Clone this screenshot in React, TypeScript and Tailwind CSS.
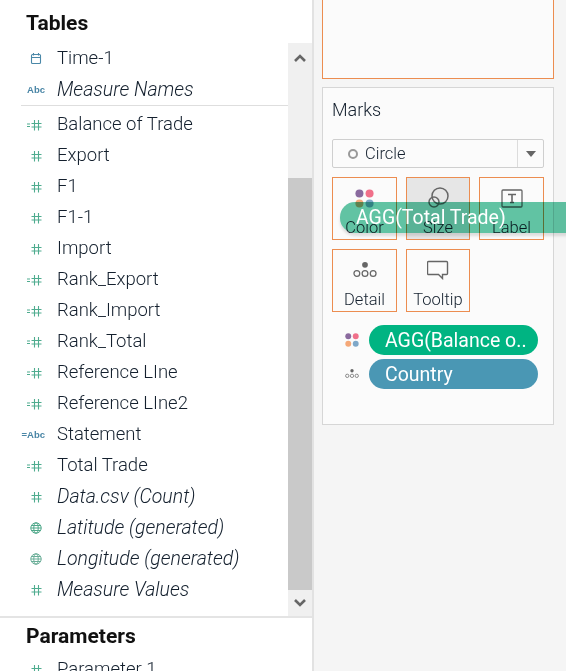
import React from "react";

const Hash = ({ calc = false }: { calc?: boolean }) => (
  <svg width="24" height="16" viewBox="0 0 24 16" fill="none" stroke="#4fac8f" strokeWidth="1.1">
    {calc && <path d="M6 7h3M6 9.5h3" />}
    <path d="M13.5 3v10.5M17.5 3v10.5M10.5 6.5h10M10.5 10h10" />
  </svg>
);
const Calendar = () => (
  <svg width="24" height="16" viewBox="0 0 24 16" fill="none" stroke="#4a88a8" strokeWidth="1.1">
    <rect x="10.5" y="3.5" width="9" height="9" rx="1" />
    <path d="M10.5 6.5h9M12.5 2v2.5M17.5 2v2.5" />
  </svg>
);
const Globe = ({ c }: { c: string }) => (
  <svg width="24" height="16" viewBox="0 0 24 16" fill="none" stroke={c} strokeWidth="1">
    <circle cx="15" cy="8" r="5.2" />
    <ellipse cx="15" cy="8" rx="2.2" ry="5.2" />
    <path d="M9.8 8h10.4M10.6 5.5h8.8M10.6 10.5h8.8" />
  </svg>
);
const AbcIcon = ({ calc = false }: { calc?: boolean }) => (
  <span className="block w-[24px] text-right text-[9.5px] leading-4 font-bold text-[#4a86a6] font-['Liberation_Sans',sans-serif]">
    {calc ? "=Abc" : "Abc"}
  </span>
);

const Row = ({ icon, label, italic }: { icon: React.ReactNode; label: string; italic?: boolean }) => (
  <div className="flex h-[31px] shrink-0 items-center">
    <div className="ml-[21px] flex w-[24px] justify-center">{icon}</div>
    <span className={`ml-[12px] whitespace-nowrap font-light text-[#14202e] ${italic ? "text-[19.5px] italic" : "text-[18.5px]"}`}>{label}</span>
  </div>
);

const Card = ({ label, icon, active }: { label: string; icon: React.ReactNode; active?: boolean }) => (
  <div className={`flex h-[63px] flex-col items-center border border-[#ec8d50] ${active ? "bg-[#e6e6e6]" : ""}`}>
    <div className="mt-[6px] flex h-[28px] items-center justify-center">{icon}</div>
    <span className="mt-[6px] text-[16.5px] leading-5 font-light text-[#14202e]">{label}</span>
  </div>
);

const Dots = ({ size = 8, gap = 1 }: { size?: number; gap?: number }) => (
  <svg width={size * 2 + gap} height={size * 2 + gap} viewBox="0 0 18 18">
    <circle cx="4.2" cy="4.2" r="3.8" fill="#8a6a9e" />
    <circle cx="13.8" cy="4.2" r="3.8" fill="#f0708a" />
    <circle cx="4.2" cy="13.8" r="3.8" fill="#f5a878" />
    <circle cx="13.8" cy="13.8" r="3.8" fill="#7fa8c8" />
  </svg>
);
const DetailIcon = ({ w = 24 }: { w?: number }) => (
  <svg width={w} height={w * 0.8} viewBox="0 0 25 20" fill="none" stroke="#666" strokeWidth="1.3">
    <circle cx="12.5" cy="5" r="3" fill="#666" stroke="none" />
    <circle cx="4" cy="14" r="3" />
    <circle cx="12.5" cy="14" r="3" />
    <circle cx="21" cy="14" r="3" />
  </svg>
);

const Pill = ({ label, color }: { label: string; color: string }) => (
  <div className={`flex h-[30px] w-[169px] items-center whitespace-nowrap rounded-[15px] pl-[16px] pt-px text-[19.5px] text-white ${color}`}>
    {label}
  </div>
);

export default function App() {
  return (
    <div className="relative flex h-[671px] w-[566px] overflow-hidden bg-[#f5f5f5] font-['Roboto',sans-serif]">
      <div className="flex w-[314px] shrink-0 flex-col border-r-2 border-[#e2e2e2] bg-white">
        <div className="flex h-[43px] shrink-0 items-center pl-[26px] pt-[5px] text-[21px] font-bold text-[#111]">Tables</div>
        <div className="flex h-[575px] shrink-0 border-b-2 border-[#e4e4e4]">
          <div className="w-[288px]">
            <Row icon={<Calendar />} label="Time-1" />
            <Row icon={<AbcIcon />} label="Measure Names" italic />
            <div className="ml-[21px] h-px bg-[#dedede]" />
            <div className="pt-[3px]">
              <Row icon={<Hash calc />} label="Balance of Trade" />
              <Row icon={<Hash />} label="Export" />
              <Row icon={<Hash />} label="F1" />
              <Row icon={<Hash />} label="F1-1" />
              <Row icon={<Hash />} label="Import" />
              <Row icon={<Hash calc />} label="Rank_Export" />
              <Row icon={<Hash calc />} label="Rank_Import" />
              <Row icon={<Hash calc />} label="Rank_Total" />
              <Row icon={<Hash calc />} label="Reference LIne" />
              <Row icon={<Hash calc />} label="Reference LIne2" />
              <Row icon={<AbcIcon calc />} label="Statement" />
              <Row icon={<Hash calc />} label="Total Trade" />
              <Row icon={<Hash />} label="Data.csv (Count)" italic />
              <Row icon={<Globe c="#4fa88a" />} label="Latitude (generated)" italic />
              <Row icon={<Globe c="#6aae98" />} label="Longitude (generated)" italic />
              <Row icon={<Hash />} label="Measure Values" italic />
            </div>
          </div>
          <div className="flex w-[24px] flex-col bg-[#f0f0f0]">
            <div className="flex h-[135px] items-start justify-center pt-[10px]">
              <svg width="14" height="10" viewBox="0 0 14 10" fill="none" stroke="#666" strokeWidth="2.6"><path d="M2 8l5-5 5 5" /></svg>
            </div>
            <div className="h-[412px] bg-[#c9c9c9]" />
            <div className="flex flex-1 items-center justify-center">
              <svg width="14" height="10" viewBox="0 0 14 10" fill="none" stroke="#666" strokeWidth="2.6"><path d="M2 2l5 5 5-5" /></svg>
            </div>
          </div>
        </div>
        <div className="flex h-[36px] shrink-0 items-center pl-[26px] pt-[2px] text-[21px] font-bold text-[#111]">Parameters</div>
        <Row icon={<Hash />} label="Parameter 1" />
      </div>

      <div className="flex-1 pl-[8px]">
        <div className="h-[79px] w-[232px] border border-t-0 border-[#ec8d50] bg-[#fbfbfb]" />
        <div className="mt-[8px] h-[338px] w-[232px] border border-[#d6d6d6] bg-[#fbfbfb] px-[9px]">
          <div className="mt-[10px] text-[18px] leading-6 font-light text-[#14202e]">Marks</div>
          <div className="mt-[17px] flex h-[29px] items-center rounded-[2px] border border-[#cfcfcf]">
            <span className="ml-[15px] h-[10px] w-[10px] rounded-full border-2 border-[#999]" />
            <span className="ml-[7px] flex-1 pt-px text-[16.5px] font-light text-[#14202e]">Circle</span>
            <div className="flex h-full w-[26px] items-center justify-center border-l border-[#dcdcdc]">
              <span className="h-0 w-0 border-x-[5px] border-t-[6px] border-x-transparent border-t-[#666]" />
            </div>
          </div>
          <div className="mt-[9px] grid grid-cols-[65px_64px_65px] gap-x-[9px] gap-y-[9px]">
            <Card label="Color" icon={<Dots size={9} gap={1} />} />
            <Card
              active
              label="Size"
              icon={
                <svg width="22" height="24" viewBox="0 0 22 24" fill="none" stroke="#666" strokeWidth="1.5">
                  <circle cx="13" cy="10" r="8" />
                  <circle cx="7" cy="16" r="5" />
                </svg>
              }
            />
            <Card
              label="Label"
              icon={
                <svg width="22" height="19" viewBox="0 0 22 19" fill="none">
                  <rect x="1" y="1" width="20" height="17" rx="1" stroke="#666" strokeWidth="1.3" />
                  <path d="M7 5.5h8M11 5.5v8M9 13.5h4" stroke="#666" strokeWidth="1.6" />
                </svg>
              }
            />
            <Card label="Detail" icon={<DetailIcon />} />
            <Card
              label="Tooltip"
              icon={
                <svg width="22" height="20" viewBox="0 0 22 20" fill="none" stroke="#666" strokeWidth="1.4">
                  <path d="M2.5 1.5h17a1 1 0 0 1 1 1v11a1 1 0 0 1-1 1h-4v4l-4-4h-10a1 1 0 0 1-1-1v-11a1 1 0 0 1 1-1z" />
                </svg>
              }
            />
          </div>
          <div className="mt-[13px] flex flex-col gap-[4px]">
            <div className="flex items-center">
              <span className="ml-[13px] mr-[10px] flex w-[14px] justify-center"><Dots size={7} gap={0} /></span>
              <Pill label="AGG(Balance o.." color="bg-[#00b482]" />
            </div>
            <div className="flex items-center">
              <span className="ml-[13px] mr-[10px] flex w-[14px] justify-center"><DetailIcon w={14} /></span>
              <Pill label="Country" color="bg-[#4a97b4]" />
            </div>
          </div>
        </div>
      </div>

      <div className="absolute left-[340px] top-[202px] flex h-[31px] w-[240px] items-center whitespace-nowrap pl-[16px] text-[19.5px] text-white">
        <span className="absolute inset-0 rounded-[15px] bg-[#62c6a6] mix-blend-multiply shadow-[0_3px_3px_rgba(0,0,0,0.12)]" />
        <span className="relative">AGG(Total Trade)</span>
      </div>
    </div>
  );
}
